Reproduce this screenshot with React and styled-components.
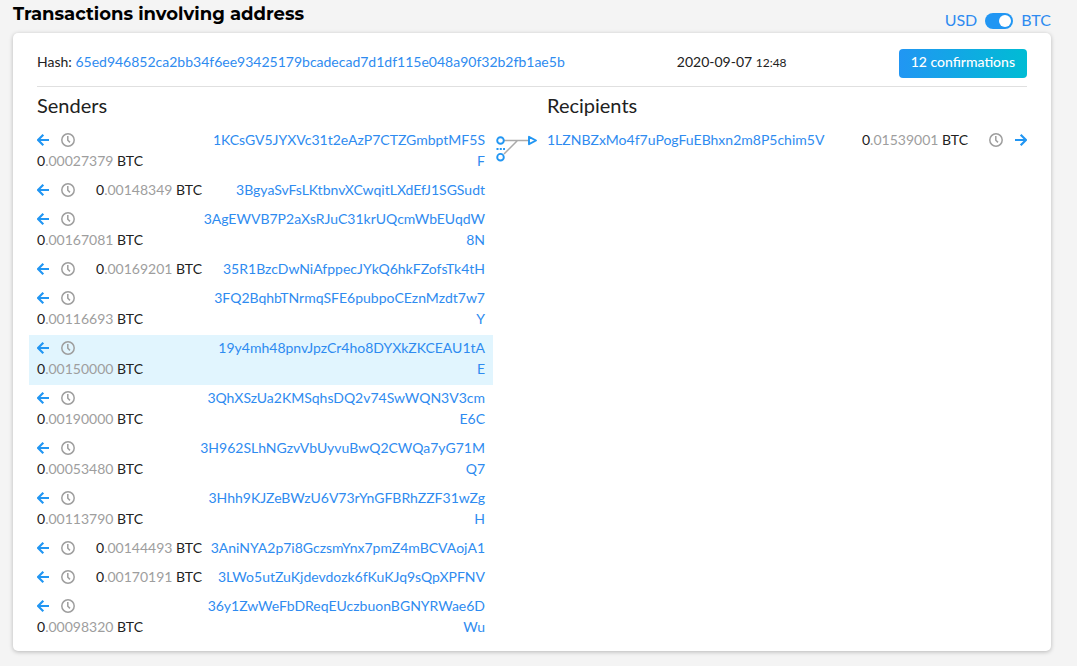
import React, { useState } from 'react';
import styled, { createGlobalStyle } from 'styled-components';

const GlobalStyle = createGlobalStyle`
  * {
    box-sizing: border-box;
  }

  body {
    margin: 0;
    background: #f4f4f4;
    color: #212121;
    font-family: Lato, "Liberation Sans", sans-serif;
    font-size: 14px;
    line-height: 21px;
  }
`;

const Page = styled.main`
  padding: 0 26px 15px 13px;
`;

const PageHeader = styled.header`
  display: flex;
  justify-content: space-between;
  align-items: flex-start;
  height: 33px;
`;

const PageTitle = styled.h1`
  margin: 0;
  font-family: Montserrat, Inter, sans-serif;
  font-size: 18px;
  font-weight: 700;
  line-height: 28px;
  color: #000;
`;

const CurrencySwitch = styled.label`
  display: flex;
  align-items: center;
  gap: 8px;
  padding-top: 8px;
  font-size: 16px;
  line-height: 24px;
  color: #2e8bf0;
  cursor: pointer;
`;

const Toggle = styled.input`
  appearance: none;
  display: flex;
  align-items: center;
  width: 28px;
  height: 16px;
  margin: 2px 0 0;
  padding: 2px;
  border-radius: 8px;
  background: #2196f3;
  cursor: pointer;

  &::before {
    content: '';
    width: 12px;
    height: 12px;
    border-radius: 50%;
    background: #fff;
  }

  &:checked::before {
    margin-left: auto;
  }
`;

const Card = styled.section`
  padding: 16px 24px 8px;
  border-radius: 5px;
  background: #fff;
  box-shadow: 0 1px 4px rgba(0, 0, 0, 0.25);
`;

const CardHeader = styled.div`
  display: flex;
  justify-content: space-between;
  align-items: flex-start;
  padding-bottom: 8px;
  border-bottom: 1px solid #e0e0e0;
`;

const Link = styled.a`
  color: #2e8bf0;
  text-decoration: none;

  &:hover {
    text-decoration: underline;
  }
`;

const Hash = styled.div`
  padding-top: 2px;
`;

const DateTime = styled.time`
  padding-top: 2px;

  small {
    font-size: 12px;
  }
`;

const Confirmations = styled.button`
  padding: 2px 12px 6px;
  border: 0;
  border-radius: 4px;
  background: linear-gradient(90deg, #2196f3, #00bcd4);
  color: #fff;
  font-family: inherit;
  font-size: 14px;
  font-weight: 500;
  line-height: 21px;
  cursor: pointer;
`;

const Columns = styled.div`
  display: grid;
  grid-template-columns: 29fr 46px 31fr;
  margin: 0 -8px;
`;

const ColumnTitle = styled.h2`
  margin: 0;
  padding: 6px 8px 10px;
  font-size: 20px;
  font-weight: 400;
  line-height: 24px;
`;

const List = styled.ul`
  margin: 0;
  padding: 0;
  list-style: none;
`;

const Row = styled.li`
  display: flex;
  justify-content: space-between;
  gap: ${props => props.$active ? '10px' : '8px'};
  padding: 2px 8px 6px;
  background: ${props => props.$active ? '#e1f5fe' : 'transparent'};
`;

const Details = styled.div`
  text-align: ${props => props.$end ? 'right' : 'left'};
`;

const Address = styled(Link)`
  text-align: ${props => props.$end ? 'right' : 'left'};
  word-break: break-all;
`;

const Icons = styled.span`
  display: inline-flex;
  align-items: center;
  gap: 12px;
  height: 21px;
  padding-top: 1px;
  margin: ${props => props.$end ? '0 0 0 21px' : '0 21px 0 0'};
  vertical-align: top;

  svg {
    display: block;
  }
`;

const Amount = styled.span`
  display: inline-block;
  white-space: nowrap;

  span {
    color: #9e9e9e;
  }
`;

const Flow = styled.div`
  padding: 47px 0 0 3px;

  svg {
    display: block;
  }
`;

const senders = [
  { address: '1KCsGV5JYXVc31t2eAzP7CTZGmbptMF5SF', amount: '0.00027379' },
  { address: '3BgyaSvFsLKtbnvXCwqitLXdEfJ1SGSudt', amount: '0.00148349' },
  { address: '3AgEWVB7P2aXsRJuC31krUQcmWbEUqdW8N', amount: '0.00167081' },
  { address: '35R1BzcDwNiAfppecJYkQ6hkFZofsTk4tH', amount: '0.00169201' },
  { address: '3FQ2BqhbTNrmqSFE6pubpoCEznMzdt7w7Y', amount: '0.00116693' },
  { address: '19y4mh48pnvJpzCr4ho8DYXkZKCEAU1tAE', amount: '0.00150000', active: true },
  { address: '3QhXSzUa2KMSqhsDQ2v74SwWQN3V3cmE6C', amount: '0.00190000' },
  { address: '3H962SLhNGzvVbUyvuBwQ2CWQa7yG71MQ7', amount: '0.00053480' },
  { address: '3Hhh9KJZeBWzU6V73rYnGFBRhZZF31wZgH', amount: '0.00113790' },
  { address: '3AniNYA2p7i8GczsmYnx7pmZ4mBCVAojA1', amount: '0.00144493' },
  { address: '3LWo5utZuKjdevdozk6fKuKJq9sQpXPFNV', amount: '0.00170191' },
  { address: '36y1ZwWeFbDReqEUczbuonBGNYRWae6DWu', amount: '0.00098320' },
];

const recipients = [
  { address: '1LZNBZxMo4f7uPogFuEBhxn2m8P5chim5V', amount: '0.01539001' },
];

function ArrowIcon({ right }) {
  return (
    <svg width="12" height="12" viewBox="0 0 12 12" fill="none" stroke="#2196f3" strokeWidth="2.2" aria-hidden="true">
      <path d={right ? 'M0 6H11M5.7 0.8L11 6L5.7 11.2' : 'M12 6H1M6.3 0.8L1 6L6.3 11.2'} />
    </svg>
  );
}

function ClockIcon() {
  return (
    <svg width="14" height="14" viewBox="0 0 14 14" fill="none" stroke="#9e9e9e" aria-hidden="true">
      <circle cx="7" cy="7" r="6.2" strokeWidth="1.5" />
      <path d="M6.8 3V7.3L9 9.4" strokeWidth="1.5" />
    </svg>
  );
}

function FlowIcon() {
  return (
    <svg width="42" height="28" viewBox="0 0 42 28" fill="none" strokeWidth="1.9" aria-hidden="true">
      <path d="M8 6.5H35M8 20L21.5 6.5" stroke="#aaa" strokeWidth="1.5" />
      <circle cx="4.5" cy="6.5" r="3.3" stroke="#2196f3" fill="#fff" />
      <circle cx="4.5" cy="23.2" r="3.3" stroke="#2196f3" fill="#fff" />
      <path d="M0.5 15H9" stroke="#2196f3" strokeDasharray="2 1.3" />
      <path d="M33 2.8V10.2L40 6.5Z" stroke="#2196f3" fill="#fff" strokeLinejoin="round" />
    </svg>
  );
}

function BtcAmount({ value }) {
  const [whole, fraction] = value.split('.');
  return (
    <Amount>
      {whole}<span>.{fraction}</span> BTC
    </Amount>
  );
}

export default function App() {
  const [inBtc, setInBtc] = useState(true);

  return (
    <Page>
      <GlobalStyle />
      <PageHeader>
        <PageTitle>Transactions involving address</PageTitle>
        <CurrencySwitch>
          USD
          <Toggle
            type="checkbox"
            role="switch"
            checked={inBtc}
            onChange={e => setInBtc(e.target.checked)}
          />
          BTC
        </CurrencySwitch>
      </PageHeader>

      <Card>
        <CardHeader>
          <Hash>
            Hash:{' '}
            <Link href="#tx">65ed946852ca2bb34f6ee93425179bcadecad7d1df115e048a90f32b2fb1ae5b</Link>
          </Hash>
          <DateTime dateTime="2020-09-07T12:48">
            2020-09-07 <small>12:48</small>
          </DateTime>
          <Confirmations type="button">12 confirmations</Confirmations>
        </CardHeader>

        <Columns>
          <div>
            <ColumnTitle>Senders</ColumnTitle>
            <List>
              {senders.map(item => (
                <Row key={item.address} $active={item.active}>
                  <Details>
                    <Icons>
                      <ArrowIcon />
                      <ClockIcon />
                    </Icons>
                    <BtcAmount value={item.amount} />
                  </Details>
                  <Address href={`#${item.address}`} $end>{item.address}</Address>
                </Row>
              ))}
            </List>
          </div>
          <Flow>
            <FlowIcon />
          </Flow>
          <div>
            <ColumnTitle>Recipients</ColumnTitle>
            <List>
              {recipients.map(item => (
                <Row key={item.address}>
                  <Address href={`#${item.address}`}>{item.address}</Address>
                  <Details $end>
                    <BtcAmount value={item.amount} />
                    <Icons $end>
                      <ClockIcon />
                      <ArrowIcon right />
                    </Icons>
                  </Details>
                </Row>
              ))}
            </List>
          </div>
        </Columns>
      </Card>
    </Page>
  );
}
